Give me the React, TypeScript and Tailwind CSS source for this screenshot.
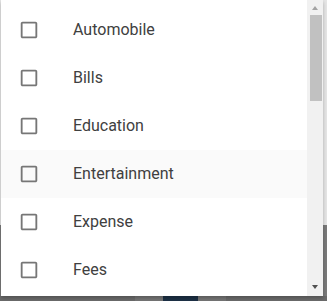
import React from "react";

const items = ["Automobile", "Bills", "Education", "Entertainment", "Expense", "Fees"];

function Box() {
  return (
    <svg width="22" height="22" viewBox="0 0 24 24" className="shrink-0">
      <path
        fill="#767676"
        d="M19 5v14H5V5h14m0-2H5c-1.1 0-2 .9-2 2v14c0 1.1.9 2 2 2h14c1.1 0 2-.9 2-2V5c0-1.1-.9-2-2-2z"
      />
    </svg>
  );
}

export default function App() {
  return (
    <div className="relative w-[327px] h-[301px] overflow-hidden" style={{ fontFamily: "Roboto, 'Noto Sans', sans-serif" }}>
      <div className="flex flex-col h-full">
        <div className="h-[225px] bg-[#e6e6e6]" />
        <div className="flex-1 bg-[#7a7a7a] flex flex-col">
          <div className="flex-1" />
          <div className="h-[5px] bg-[#6b6b6b] flex">
            <div className="w-[135px]" />
            <div className="w-[28px] bg-[#767676]" />
            <div className="w-[35px] bg-[#1d3146]" />
            <div className="w-[28px] bg-[#767676]" />
          </div>
        </div>
      </div>
      <div className="absolute left-[1px] top-0 w-[322px] h-[296px] bg-white shadow-[0_2px_4px_rgba(0,0,0,0.25)] flex">
        <div className="flex-1 overflow-hidden pt-[6px]">
          {items.map((t) => (
            <div
              key={t}
              className={`h-[48px] flex items-center pl-[17px] ${t === "Entertainment" ? "bg-[#fafafa]" : ""}`}
            >
              <Box />
              <span className="ml-[33px] text-[16px] text-[#404040] leading-none">{t}</span>
            </div>
          ))}
        </div>
        <div className="w-[16px] h-full bg-[#f1f1f1] flex flex-col items-center">
          <div className="h-[15px] w-full flex items-center justify-center">
            <div className="w-0 h-0 border-l-[3.5px] border-r-[3.5px] border-b-[4px] border-l-transparent border-r-transparent border-b-[#a3a3a3]" />
          </div>
          <div className="w-[12px] ml-[1px] h-[86px] bg-[#c1c1c1]" />
          <div className="flex-1" />
          <div className="h-[15px] w-full flex items-center justify-center mb-[2px]">
            <div className="w-0 h-0 border-l-[3.5px] border-r-[3.5px] border-t-[4px] border-l-transparent border-r-transparent border-t-[#505050]" />
          </div>
        </div>
      </div>
    </div>
  );
}
